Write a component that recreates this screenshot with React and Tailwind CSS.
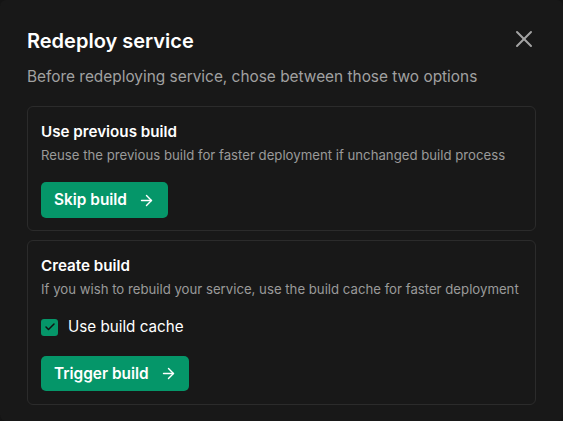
import React, { useState } from "react";
import { X, ArrowRight, Check } from "lucide-react";

export default function App() {
  const [useCache, setUseCache] = useState(true);

  return (
    <div className="h-[421px] w-[563px] bg-[#141414] font-['Inter',sans-serif]">
      <div className="h-full w-full rounded-[6px] bg-[#181818] px-[27px] pt-[28px] pb-[18px]">
        <div className="flex h-[26px] items-center justify-between">
          <h2 className="text-[20px] font-semibold leading-[26px] text-white">Redeploy service</h2>
          <button className="-mr-[2px] -mt-[4px] text-[#a3a3a3]" aria-label="Close">
            <X className="h-[28px] w-[28px]" strokeWidth={1.7} />
          </button>
        </div>
        <p className="mt-[12px] text-[15.4px] leading-[22px] text-[#a1a1a1]">
          Before redeploying service, chose between those two options
        </p>

        <div className="mt-[18px] flex flex-col gap-[9px]">
          <div className="rounded-[6px] border border-[#2b2b2b] px-[13px] pt-[14px] pb-[12px]">
            <h3 className="text-[15.2px] font-semibold leading-[22px] text-white">Use previous build</h3>
            <p className="mt-[2px] text-[13.2px] leading-[20px] text-[#9a9a9a]">
              Reuse the previous build for faster deployment if unchanged build process
            </p>
            <button className="mt-[17px] flex h-[36px] items-center gap-[11px] rounded-[5px] bg-[#059669] pl-[13px] pr-[13px] text-[15.4px] font-semibold text-white">
              Skip build
              <ArrowRight className="h-[17px] w-[17px]" strokeWidth={2} />
            </button>
          </div>

          <div className="rounded-[6px] border border-[#2b2b2b] px-[13px] pt-[14px] pb-[13px]">
            <h3 className="text-[15.2px] font-semibold leading-[22px] text-white">Create build</h3>
            <p className="mt-[2px] text-[13.2px] leading-[20px] text-[#9a9a9a]">
              If you wish to rebuild your service, use the build cache for faster deployment
            </p>
            <label className="mt-[17px] flex items-center gap-[10px] text-[15.2px] leading-[22px] text-white">
              <button
                onClick={() => setUseCache(!useCache)}
                className="flex h-[17px] w-[17px] items-center justify-center rounded-[3px] bg-[#059669]"
              >
                {useCache && <Check className="h-[12px] w-[12px] text-[#111]" strokeWidth={3} />}
              </button>
              Use build cache
            </label>
            <button className="mt-[18px] flex h-[35px] items-center gap-[11px] rounded-[5px] bg-[#059669] pl-[13px] pr-[12px] text-[15.4px] font-semibold text-white">
              Trigger build
              <ArrowRight className="h-[17px] w-[17px]" strokeWidth={2} />
            </button>
          </div>
        </div>
      </div>
    </div>
  );
}
